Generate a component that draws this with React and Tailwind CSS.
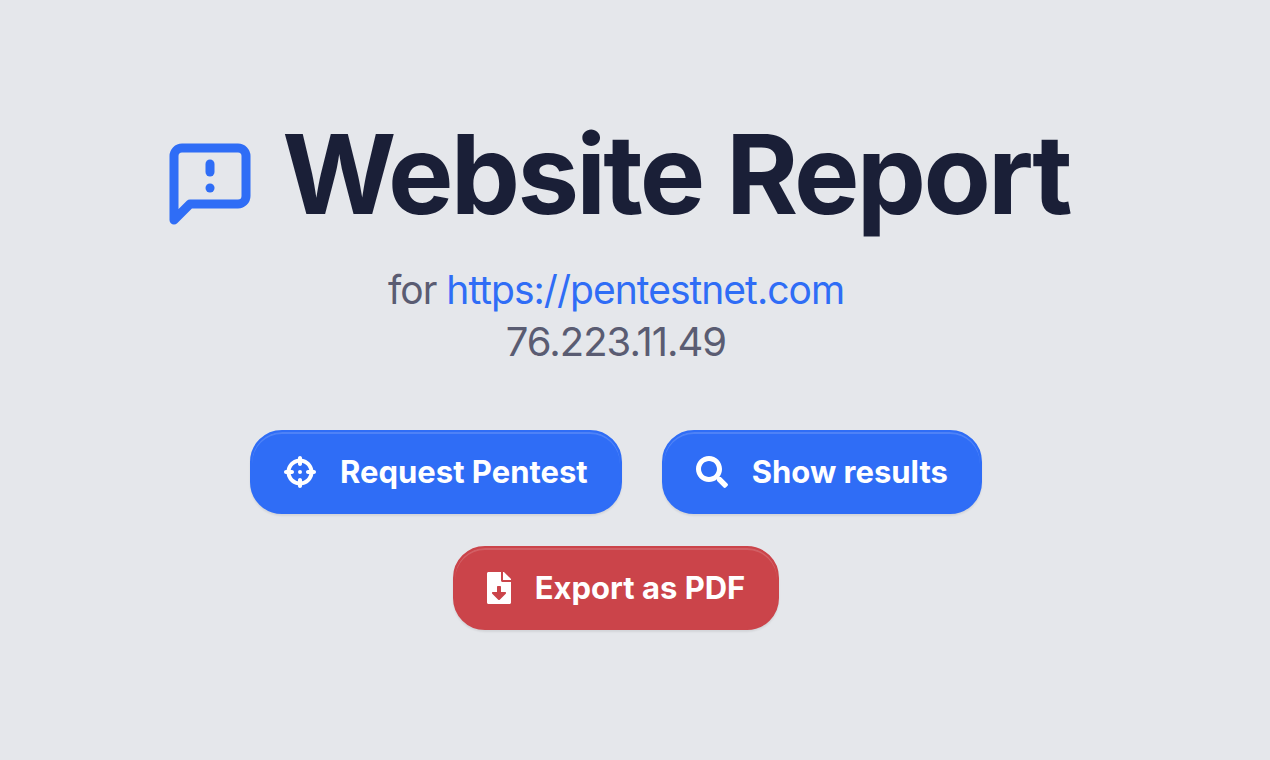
import React from 'react';
import { FaSearch, FaFileDownload } from 'react-icons/fa';
import { FaCrosshairs } from 'react-icons/fa6';
import { clsx } from 'clsx';

const BUTTON_VARIANTS = {
  primary: 'bg-[#2f6df6] border-[#2f6df6]',
  danger: 'bg-[#cb444a] border-[#cb444a]',
};

const ReportIcon = () => (
  <svg
    viewBox="0 0 24 24"
    className="h-24 w-24 shrink-0 text-[#2f6df6]"
    fill="none"
    stroke="currentColor"
    strokeWidth="2.25"
    strokeLinecap="round"
    strokeLinejoin="round"
    aria-hidden="true"
  >
    <path d="M21 15a2 2 0 0 1-2 2H7l-4 4V5a2 2 0 0 1 2-2h14a2 2 0 0 1 2 2z" />
    <path d="M12 7v2" />
    <path d="M12 13h.01" />
  </svg>
);

const ActionButton = ({ icon, variant = 'primary', children }) => (
  <button
    type="button"
    className={clsx(
      'flex h-[84px] items-center gap-6 rounded-[32px] border-2 px-8 text-[31px] leading-[48px] font-bold text-white',
      'shadow-[inset_0_2px_0_rgba(255,255,255,0.15),0_2px_2px_rgba(0,0,0,0.08)]',
      BUTTON_VARIANTS[variant]
    )}
  >
    {icon}
    {children}
  </button>
);

const App = () => {
  return (
    <main className="min-h-screen bg-[#e5e7eb] pt-[114px] pr-[38px] font-['Inter',sans-serif]">
      <div className="flex flex-col items-center">
        {/* Title */}
        <h1 className="flex items-center gap-6 text-[110px] leading-[120px] font-bold tracking-tight text-[#1a1f37]">
          <span className="pt-5"><ReportIcon /></span>
          Website Report
        </h1>

        {/* Scanned target */}
        <div className="mt-[30px] text-center leading-[52px] text-[#5a5c72]">
          <p className="text-[39px] tracking-tight">
            for <a href="https://pentestnet.com" className="text-[#2f6df6]">https://pentestnet.com</a>
          </p>
          <p className="text-[40px] tracking-tight">76.223.11.49</p>
        </div>

        {/* Actions */}
        <div className="mt-[62px] flex flex-wrap justify-center gap-10">
          <ActionButton icon={<FaCrosshairs className="h-8 w-8" />}>Request Pentest</ActionButton>
          <ActionButton icon={<FaSearch className="h-8 w-8" />}>Show results</ActionButton>
        </div>
        <div className="mt-8">
          <ActionButton variant="danger" icon={<FaFileDownload className="h-8 w-6" />}>
            Export as PDF
          </ActionButton>
        </div>
      </div>
    </main>
  );
};

export default App;
